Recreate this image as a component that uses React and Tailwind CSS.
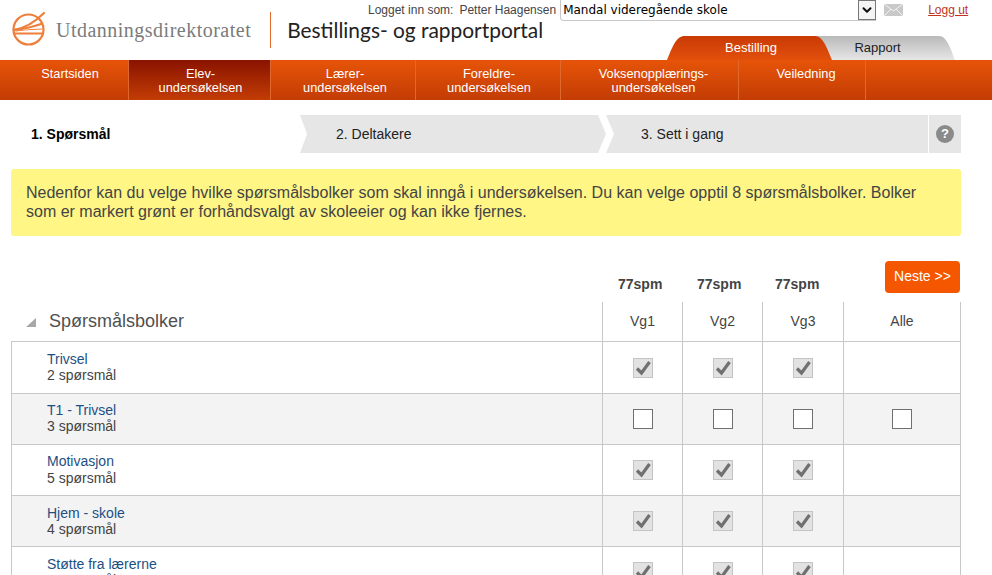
import { ChevronDown } from 'lucide-react';

const NAV = [
  { cell: 'w-[129px] pl-[12px]', lines: ['Startsiden'] },
  { cell: 'w-[142px] pl-[2px]', lines: ['Elev-', 'undersøkelsen'], active: true },
  { cell: 'w-[145px] pl-[4px]', lines: ['Lærer-', 'undersøkelsen'] },
  { cell: 'w-[145px] pl-[2px]', lines: ['Foreldre-', 'undersøkelsen'] },
  { cell: 'w-[178px] pl-[8px]', lines: ['Voksenopplærings-', 'undersøkelsen'] },
  { cell: 'w-[127px] pl-[8px]', lines: ['Veiledning'] },
];

const ROWS = [
  { title: 'Trivsel', count: '2 spørsmål', locked: true, h: 'h-[52px]', pad: 'pt-[9px]' },
  { title: 'T1 - Trivsel', count: '3 spørsmål', locked: false, h: 'h-[51px]', pad: 'pt-[8px]' },
  { title: 'Motivasjon', count: '5 spørsmål', locked: true, h: 'h-[51px]', pad: 'pt-[8px]', gap: 'mt-px' },
  { title: 'Hjem - skole', count: '4 spørsmål', locked: true, h: 'h-[51px]', pad: 'pt-[9px]' },
  { title: 'Støtte fra lærerne', count: '6 spørsmål', locked: true, h: 'h-[51px]', pad: 'pt-[9px]' },
];

const COLS = ['w-[80px]', 'w-[80px]', 'w-[81px]'];
const SPM = ['w-[79px]', 'w-[78px]', 'w-[80px]'];

function Logo() {
  return (
    <svg width="36" height="38" viewBox="0 0 36 38" fill="none" stroke="#ee7f3b" strokeWidth="2.2" strokeLinecap="round">
      <circle cx="17.5" cy="18.5" r="15" />
      <path d="M3 19 C15 17 25 10 33 2" />
      <path d="M3 19 C14 18 24 15 30 13" />
      <path d="M5 20 C14 19 24 18 31 18" strokeWidth="1.2" />
      <path d="M3 22.5 H32" />
    </svg>
  );
}

function Box({ locked }) {
  if (locked) {
    return (
      <div className="w-5 h-5 border border-[#c4c4c4] bg-[#e2e2e2] flex items-center justify-center">
        <svg width="18" height="18" viewBox="0 0 18 18" fill="none" stroke="#707070" strokeWidth="3.2">
          <path d="M3 9.5 L7.5 14 L15.5 3" />
        </svg>
      </div>
    );
  }
  return <div className="w-5 h-5 border border-[#707070] bg-white" />;
}

function Row({ row, shaded }) {
  return (
    <div className={`flex ${row.h} border-b border-[#c8c8c8] ${shaded ? 'bg-[#f3f3f3]' : 'bg-white'}`}>
      <div className={`w-[591px] pl-[35px] ${row.pad} border-r border-[#c8c8c8] text-[14px] leading-[16px]`}>
        <div className="text-[#1c4f84]">{row.title}</div>
        <div className={`text-[#444] ${row.gap || ''}`}>{row.count}</div>
      </div>
      {COLS.map((w, i) => (
        <div key={i} className={`${w} border-r border-[#c8c8c8] flex items-center justify-center`}>
          <Box locked={row.locked} />
        </div>
      ))}
      <div className="flex-1 flex items-center justify-center">
        {!row.locked && <Box locked={false} />}
      </div>
    </div>
  );
}

export default function App() {
  return (
    <div className="w-[992px] h-[575px] overflow-hidden bg-white font-['Liberation_Sans',Arial,sans-serif]">
      <header className="relative h-[60px] flex">
        <div className="flex items-center pl-[11px]">
          <Logo />
          <span className="ml-[9px] font-['Liberation_Serif',serif] text-[20px] tracking-[0.49px] text-[#7b7b7b]">Utdanningsdirektoratet</span>
          <div className="ml-[19px] w-px h-[36px] bg-[#e06a2a]" />
          <span className="ml-[16px] font-['Lato',sans-serif] text-[20.9px] text-[#222]">Bestillings- og rapportportal</span>
        </div>
        <div className="absolute left-[368px] top-0 flex items-center h-[20px] text-[12px] text-[#444]">
          <span>Logget inn som:</span>
          <span className="ml-[6px]">Petter Haagensen</span>
          <div className="ml-[4px] w-[316px] h-[21px] border-l border-b border-[#c8c8c8] rounded-bl flex items-center justify-between">
            <span className="pl-[2px] font-['DejaVu_Sans',sans-serif] text-[12px] text-black">Mandal videregående skole</span>
            <span className="w-[18px] h-[20px] border border-[#777] bg-[#f4f4f4] flex items-center justify-center">
              <ChevronDown size={14} strokeWidth={3.5} color="#111" />
            </span>
          </div>
          <svg className="ml-[8px]" width="19" height="12" viewBox="0 0 19 12">
            <rect width="19" height="12" fill="#c9c9c9" />
            <path d="M0 0 L9.5 7 L19 0 M0 12 L7 5 M19 12 L12 5" stroke="#f2f2f2" fill="none" />
          </svg>
          <a className="ml-[25px] text-[#c0341d] underline">Logg ut</a>
        </div>
        <div className="absolute left-[667px] top-[36px] h-[24px] w-[288px] flex">
          <svg className="absolute inset-0" width="288" height="24" viewBox="0 0 288 24">
            <defs>
              <linearGradient id="grey" x1="0" y1="0" x2="0" y2="1">
                <stop offset="0" stopColor="#b9b9b9" />
                <stop offset="1" stopColor="#e6e6e6" />
              </linearGradient>
              <linearGradient id="orange" x1="0" y1="0" x2="0" y2="1">
                <stop offset="0" stopColor="#c93a05" />
                <stop offset="1" stopColor="#e2500c" />
              </linearGradient>
            </defs>
            <path d="M145 0 H272 C280 0 284 14 288 24 H160 Z" fill="url(#grey)" />
            <path d="M0 24 C6 10 9 0 18 0 H148 C156 0 160 12 165 24 Z" fill="url(#orange)" />
          </svg>
          <span className="relative w-[168px] text-center text-[13px] leading-[24px] text-white">Bestilling</span>
          <span className="relative w-[85px] text-center text-[13px] leading-[24px] text-[#222]">Rapport</span>
        </div>
      </header>

      <nav className="h-[40px] flex bg-gradient-to-b from-[#e65408] to-[#c33c05]">
        {NAV.map((item) => (
          <div
            key={item.lines[0]}
            className={`${item.cell} border-r border-[#e0682c] text-center text-[12.8px] leading-[14px] text-white pt-[7px] ${item.active ? 'bg-gradient-to-b from-[#8a1200] to-[#c33c05]' : ''}`}
          >
            {item.lines.map((l) => <div key={l}>{l}</div>)}
          </div>
        ))}
      </nav>

      <div className="mt-[15px] ml-[11px] w-[950px] h-[38px] flex text-[14px] text-[#222]">
        <div className="w-[289px] pl-[20px] font-bold text-black flex items-center text-[14px]">1. Spørsmål</div>
        <div className="relative w-[306px] pl-[36px] flex items-center">
          <svg className="absolute inset-0" width="306" height="38" viewBox="0 0 306 38">
            <path d="M0 0 H298 L306 19 L298 38 H0 L7 19 Z" fill="#e6e6e6" />
          </svg>
          <span className="relative">2. Deltakere</span>
        </div>
        <div className="relative w-[322px] pl-[35px] flex items-center">
          <svg className="absolute inset-0" width="322" height="38" viewBox="0 0 322 38">
            <path d="M0 0 H322 V38 H0 L8 19 Z" fill="#e6e6e6" />
          </svg>
          <span className="relative">3. Sett i gang</span>
        </div>
        <div className="ml-px flex-1 bg-[#e6e6e6] flex items-center justify-center">
          <span className="w-[18px] h-[18px] rounded-full bg-[#8a8a8a] text-white text-[13px] font-bold text-center leading-[18px]">?</span>
        </div>
      </div>

      <div className="mt-[16px] ml-[11px] w-[950px] h-[67px] rounded-[3px] bg-[#fff686] px-[15px] pt-[14px] text-[16px] leading-[19px] text-[#444]">
        Nedenfor kan du velge hvilke spørsmålsbolker som skal inngå i undersøkelsen. Du kan velge opptil 8 spørsmålsbolker. Bolker som er markert grønt er forhåndsvalgt av skoleeier og kan ikke fjernes.
      </div>

      <div className="mt-[25px] ml-[11px] w-[950px] h-[41px] flex">
        <div className="w-[592px]" />
        {SPM.map((w, i) => (
          <div key={i} className={`${w} pt-[13px] pl-[15px] text-[14px] font-bold text-[#444]`}>77spm</div>
        ))}
        <div className="flex-1 flex justify-end">
          <button className="mr-px w-[75px] h-[32px] rounded-[4px] bg-[#f55600] text-white text-[14px] pb-[2px]">Neste &gt;&gt;</button>
        </div>
      </div>

      <div className="ml-[11px] w-[950px] border-r border-[#c8c8c8]">
        <div className="flex h-[40px] border-b border-[#c8c8c8] text-[14px] text-[#444]">
          <div className="w-[592px] border-r border-[#c8c8c8] flex items-center">
            <svg className="ml-[15px]" width="10" height="10" viewBox="0 0 10 10">
              <path d="M10 1 V10 H0 Z" fill="#a8a8a8" />
            </svg>
            <span className="ml-[13px] text-[18px] text-[#505050]">Spørsmålsbolker</span>
          </div>
          {['Vg1', 'Vg2', 'Vg3'].map((label, i) => (
            <div key={label} className={`${COLS[i]} border-r border-[#c8c8c8] text-center pt-[9px]`}>{label}</div>
          ))}
          <div className="flex-1 text-center pt-[9px]">Alle</div>
        </div>
        <div className="border-l border-[#c8c8c8]">
          {ROWS.map((row, i) => <Row key={row.title} row={row} shaded={i % 2 === 1} />)}
        </div>
      </div>
    </div>
  );
}
